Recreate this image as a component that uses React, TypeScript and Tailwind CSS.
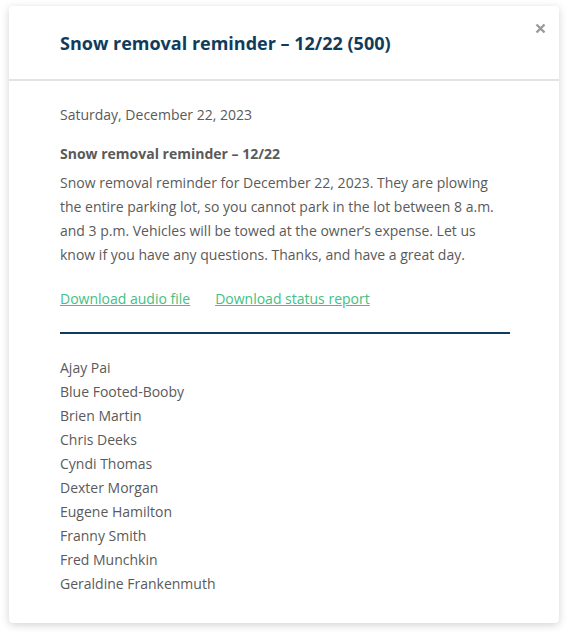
const names = [
  "Ajay Pai",
  "Blue Footed-Booby",
  "Brien Martin",
  "Chris Deeks",
  "Cyndi Thomas",
  "Dexter Morgan",
  "Eugene Hamilton",
  "Franny Smith",
  "Fred Munchkin",
  "Geraldine Frankenmuth",
]

export default function App() {
  return (
    <div
      className="min-h-[635px] bg-white px-[9px] pt-[6px] pb-[12px]"
      style={{ fontFamily: '"Open Sans", "Noto Sans", sans-serif' }}
    >
      <div className="relative w-[550px] rounded-[4px] bg-white shadow-[0_2px_8px_rgba(0,0,0,0.18)]">
        <div className="border-b-2 border-[#e3e3e3] pl-[51px] pr-[49px] pt-[24px] pb-[22px]">
          <h1 className="text-[18px] font-bold leading-[27px] text-[#0f3c5c]">
            Snow removal reminder – 12/22 (500)
          </h1>
        </div>
        <button className="absolute top-[12px] right-[9px] flex h-[20px] w-[20px] items-center justify-center text-[#9a9a9a]">
          <svg width="11" height="11" viewBox="0 0 11 11">
            <path d="M1.5 1.5l8 8M9.5 1.5l-8 8" stroke="currentColor" strokeWidth="2.4" />
          </svg>
        </button>
        <div className="pl-[51px] pr-[49px] pt-[22px] pb-[27px] text-[14px] leading-[24px] text-[#5a5a5a]">
          <p>Saturday, December 22, 2023</p>
          <h2 className="mt-[15px] font-bold">Snow removal reminder – 12/22</h2>
          <p className="mt-[5px]">
            Snow removal reminder for December 22, 2023. They are plowing the entire parking
            lot, so you cannot park in the lot between 8 a.m. and 3 p.m. Vehicles will be towed
            at the owner’s expense. Let us know if you have any questions. Thanks, and have a
            great day.
          </p>
          <div className="mt-[20px] flex gap-[25px]">
            <a href="#" className="text-[#43c082] underline">
              Download audio file
            </a>
            <a href="#" className="text-[#43c082] underline">
              Download status report
            </a>
          </div>
          <div className="mt-[21px] h-[2px] bg-[#0f3c5c]" />
          <ul className="mt-[22px]">
            {names.map((n) => (
              <li key={n}>{n}</li>
            ))}
          </ul>
        </div>
      </div>
    </div>
  )
}
